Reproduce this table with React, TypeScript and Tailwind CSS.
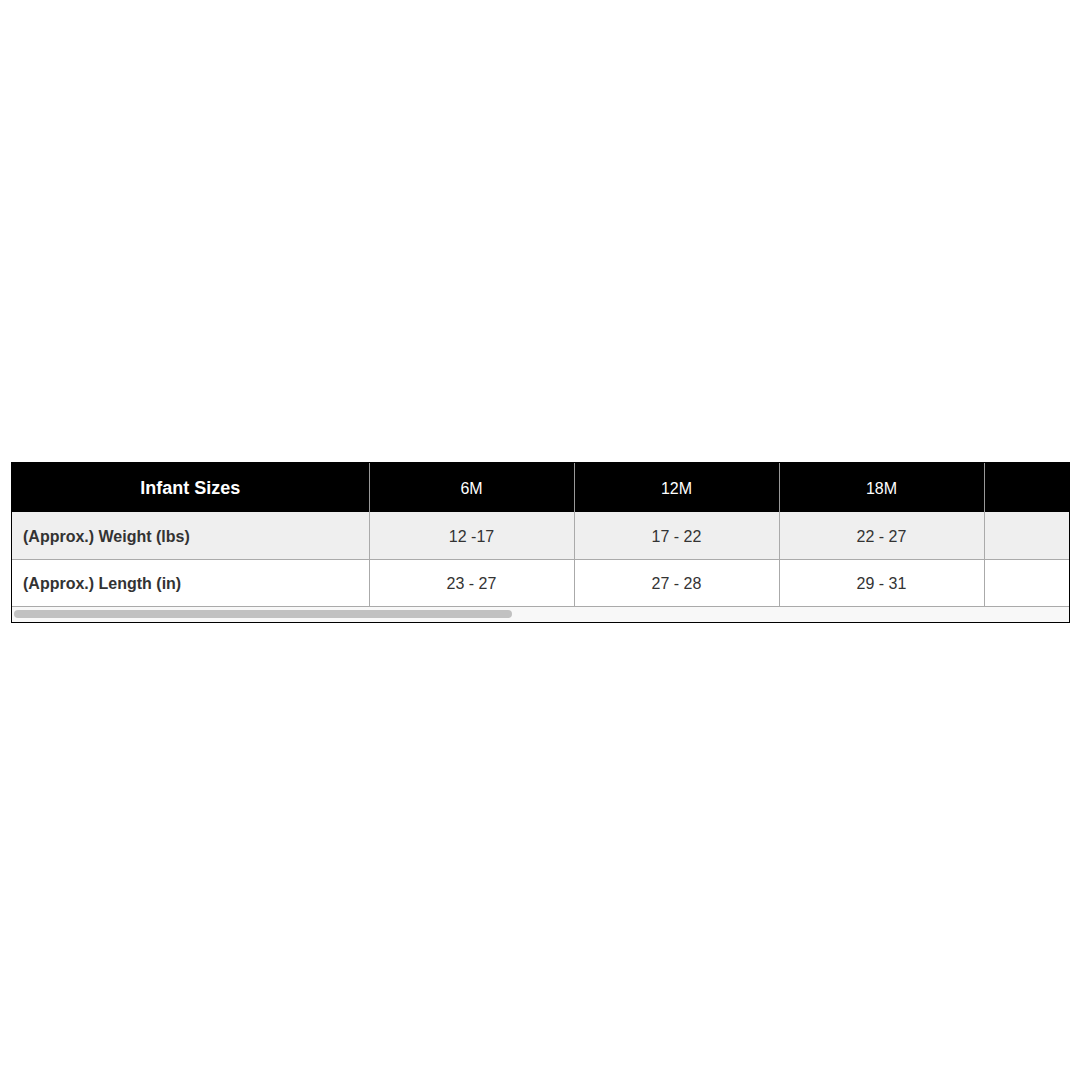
const sizes = ["6M", "12M", "18M"];
const weight = ["12 -17", "17 - 22", "22 - 27"];
const length = ["23 - 27", "27 - 28", "29 - 31"];

export default function App() {
  return (
    <div className="min-h-screen bg-white pt-[462px] px-[11px] font-['Liberation_Sans',Arial,sans-serif]">
      <div className="w-[1059px] border border-black">
        <div className="overflow-hidden">
          <table className="table-fixed border-collapse w-[2203px]">
            <thead>
              <tr className="bg-black text-white h-[49px]">
                <th className="w-[357px] border-r border-[#999] text-[18px] font-bold text-center p-0 pt-[2px]">
                  Infant Sizes
                </th>
                {sizes.map((s) => (
                  <th key={s} className="w-[205px] border-x border-[#999] text-[16px] font-normal text-center p-0 pt-[2px]">
                    {s}
                  </th>
                ))}
                <th className="border-x border-[#999] p-0" />
              </tr>
            </thead>
            <tbody className="text-[16px] text-[#333]">
              <tr className="bg-[#efefef] h-[47px]">
                <td className="border-r border-b border-[#aaa] font-bold p-0 pl-[11px] pt-[3px]">(Approx.) Weight (lbs)</td>
                {weight.map((w, i) => (
                  <td key={i} className="border border-t-0 border-[#aaa] text-center p-0 pt-[3px]">{w}</td>
                ))}
                <td className="border border-t-0 border-[#aaa] p-0" />
              </tr>
              <tr className="bg-white h-[47px]">
                <td className="border-r border-b border-[#aaa] font-bold p-0 pl-[11px] pt-[2px]">(Approx.) Length (in)</td>
                {length.map((l, i) => (
                  <td key={i} className="border border-t-0 border-[#aaa] text-center p-0 pt-[2px]">{l}</td>
                ))}
                <td className="border border-t-0 border-[#aaa] p-0" />
              </tr>
            </tbody>
          </table>
        </div>
        <div className="h-[15px] bg-[#f8f8f8] flex items-center px-[2px]">
          <div className="h-[8px] w-[498px] rounded-full bg-[#c1c1c1]" />
        </div>
      </div>
    </div>
  );
}
